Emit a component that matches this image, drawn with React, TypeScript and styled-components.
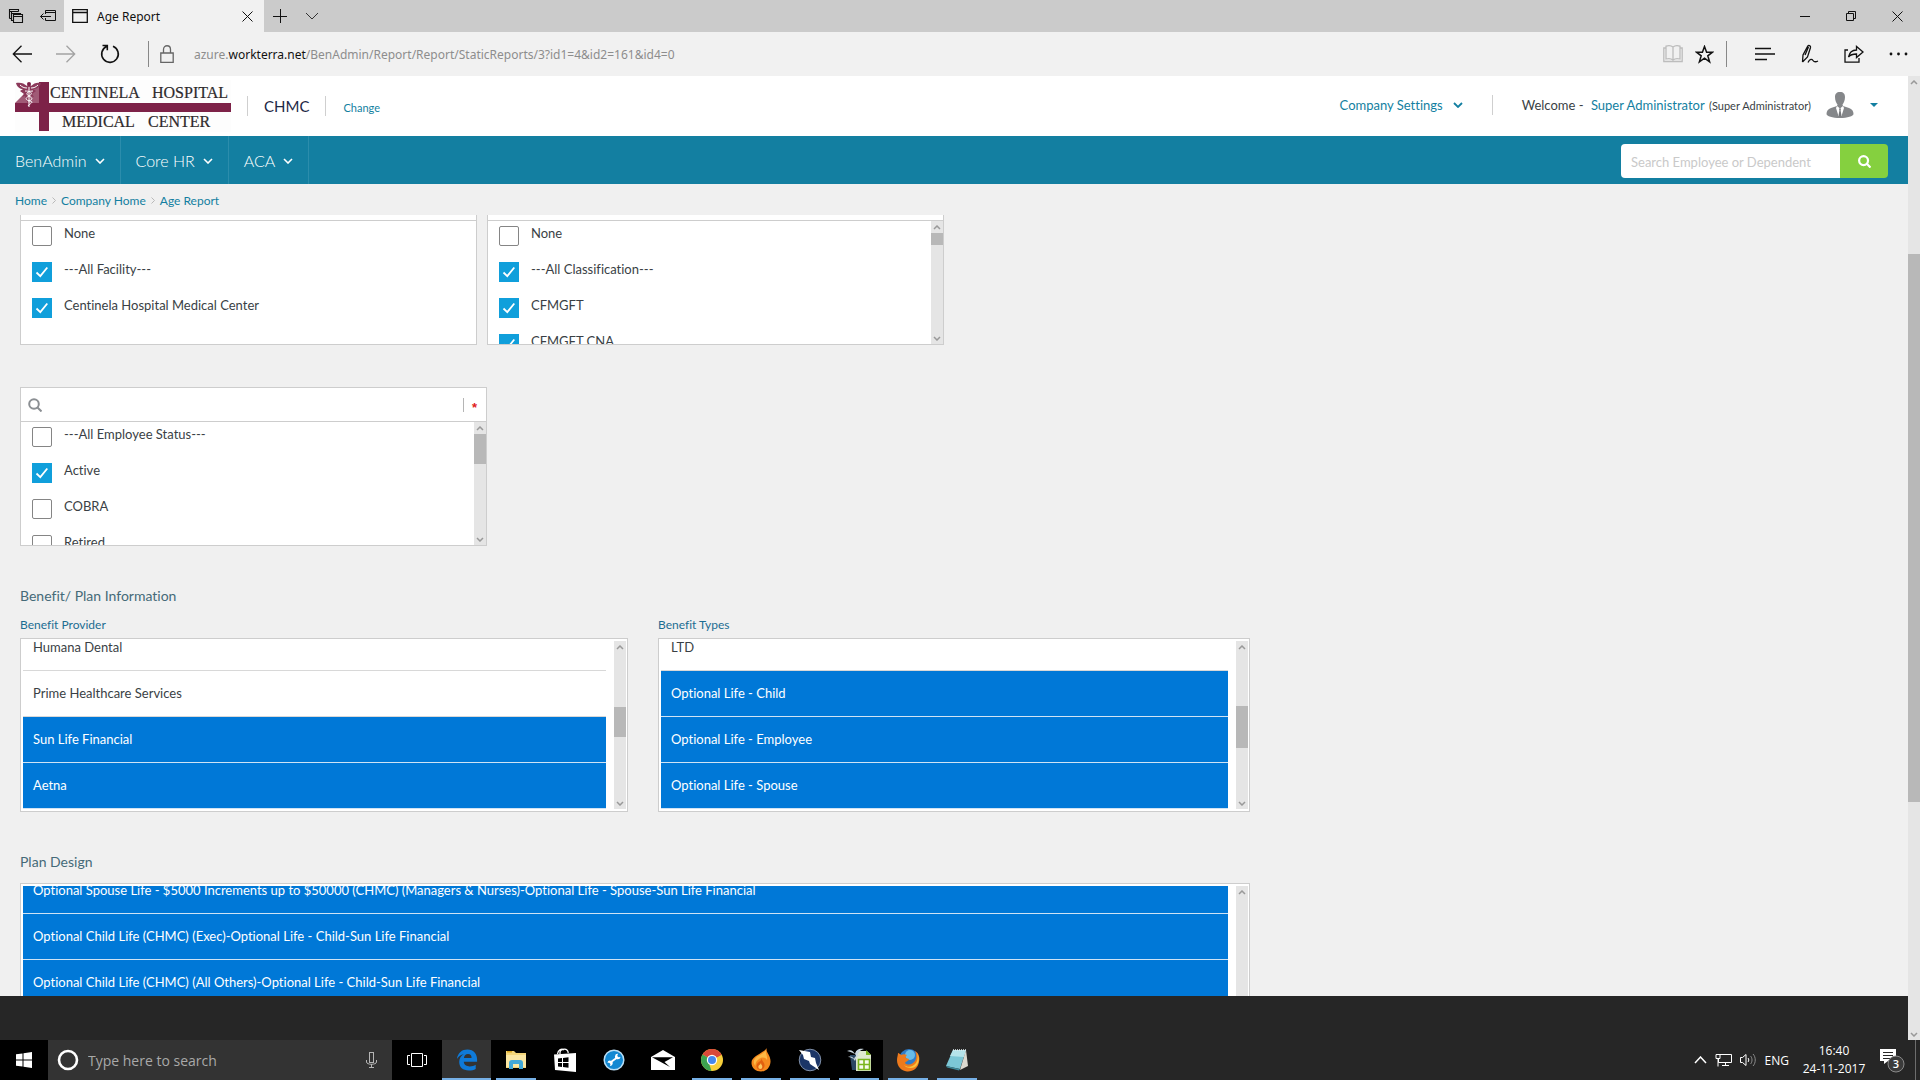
import React from "react";
import styled, { createGlobalStyle } from "styled-components";

const teal = "#137fa1";
const chromeFont = `"Noto Sans", "Open Sans", sans-serif`;

const Global = createGlobalStyle`
  *, *::before, *::after { box-sizing: border-box; }
  html, body, #root { height: 100%; }
  body { margin: 0; font-family: Lato, "Liberation Sans", sans-serif; font-size: 13px; font-variant-ligatures: no-common-ligatures; color: #3a3f45; overflow: hidden; }
  button, input { font: inherit; color: inherit; }
  button { background: none; border: 0; padding: 0; cursor: pointer; }
  a { color: ${teal}; text-decoration: none; }
  ul, ol, h2, p { margin: 0; padding: 0; list-style: none; font-weight: 400; }
  svg { display: block; flex: none; }
`;

const Screen = styled.div`
  display: flex;
  flex-direction: column;
  height: 100vh;
  background: #f0f0f0;
`;

/* ---------- browser chrome ---------- */
const TitleBar = styled.header`
  display: flex;
  flex: none;
  height: 32px;
  background: #cbcbcb;
  font-family: ${chromeFont};
  color: #111;
`;
const TabTools = styled.div`
  display: flex;
  align-items: center;
  gap: 16px;
  width: 64px;
  padding-left: 8px;
`;
const Tab = styled.div`
  display: flex;
  align-items: center;
  width: 200px;
  padding: 0 11px 0 8px;
  background: #f1f1f1;
  font-size: 12px;
`;
const TabTitle = styled.span`
  flex: 1;
  padding-left: 9px;
`;
const TabActions = styled.div`
  display: flex;
  flex: 1;
  align-items: center;
  gap: 18px;
  padding-left: 9px;
`;
const WindowButtons = styled.div`
  display: flex;
`;
const WindowButton = styled.button`
  display: grid;
  place-items: center;
  width: 46px;
`;
const IconButton = styled.button`
  display: grid;
  place-items: center;
`;

const Toolbar = styled.div`
  display: flex;
  flex: none;
  align-items: center;
  height: 44px;
  padding: 0 12px;
  background: #f1f1f1;
  font-family: ${chromeFont};
  color: #111;
`;
const NavButtons = styled.div`
  display: flex;
  align-items: center;
  gap: 24px;
`;
const ToolDivider = styled.span`
  width: 1px;
  height: 26px;
  margin: 0 11px 0 28px;
  background: #888;
`;
const Address = styled.div`
  flex: 1;
  padding-left: 20px;
  font-size: 12px;
  color: #8d8d8d;
  b { font-weight: 400; color: #111; }
`;
const ToolGroup = styled.div<{ $gap: number }>`
  display: flex;
  align-items: center;
  gap: ${(p) => p.$gap}px;
`;
const GroupDivider = styled.span`
  width: 1px;
  height: 26px;
  margin: 0 28px 0 12px;
  background: #888;
`;

/* ---------- page frame ---------- */
const Viewport = styled.div`
  display: flex;
  flex: 1;
  min-height: 0;
`;
const Page = styled.div`
  display: flex;
  flex: 1;
  flex-direction: column;
  min-width: 0;
`;
const SiteHeader = styled.div`
  display: flex;
  flex: none;
  align-items: center;
  height: 60px;
  padding: 0 30px 0 15px;
  background: #fff;
`;
const HeadDivider = styled.span<{ $gap: number }>`
  width: 1px;
  height: 20px;
  margin: 0 ${(p) => p.$gap}px;
  background: #cfcfcf;
`;
const CompanyCode = styled.span`
  font-size: 15px;
  color: #1d2846;
`;
const ChangeLink = styled.a`
  padding: 2px 0 0 1px;
  font-size: 11px;
`;
const Account = styled.div`
  display: flex;
  align-items: center;
  margin-left: auto;
  padding-bottom: 3px;
  font-size: 13px;
  white-space: nowrap;
`;
const SettingsButton = styled.button`
  display: flex;
  align-items: center;
  gap: 10px;
  color: ${teal};
`;
const UserLine = styled.p`
  padding-right: 15px;
  a { margin: 0 1px 0 4px; }
  small { font-size: 11px; }
`;
const UserMenu = styled.button`
  display: flex;
  align-items: center;
  gap: 16px;
`;

const MainNav = styled.nav`
  display: flex;
  flex: none;
  align-items: center;
  height: 48px;
  padding-right: 20px;
  background: ${teal};
`;
const NavItem = styled.button`
  display: flex;
  align-items: center;
  gap: 8px;
  height: 100%;
  padding: 0 15px;
  border-right: 1px solid #2b8dac;
  color: #fff;
  font-size: 16px;
  font-weight: 300;
`;
const NavChevron = styled.span`
  padding-top: 2px;
`;
const SearchForm = styled.form`
  display: flex;
  width: 267px;
  height: 34px;
  margin: 2px 0 0 auto;
  border-radius: 4px;
  overflow: hidden;
`;
const SearchInput = styled.input`
  flex: 1;
  min-width: 0;
  padding: 2px 10px 0;
  border: 0;
  background: #fff;
  font-size: 13px;
  outline: 0;
  &::placeholder { color: #c9c9c9; opacity: 1; }
`;
const SearchButton = styled.button`
  display: grid;
  place-items: center;
  width: 48px;
  background: #85d03f;
`;
const Crumbs = styled.ol`
  display: flex;
  flex: none;
  align-items: center;
  gap: 5px;
  height: 31px;
  padding: 2px 15px 0;
  font-size: 12px;
`;
const Crumb = styled.li`
  display: flex;
  align-items: center;
  gap: 5px;
`;
const Content = styled.main`
  flex: 1;
  min-height: 0;
  padding: 0 20px;
  overflow: hidden;
`;
const Footer = styled.footer`
  flex: none;
  height: 44px;
  background: #262626;
`;

/* ---------- scroll bars ---------- */
const Bar = styled.div`
  display: flex;
  flex: none;
  flex-direction: column;
  width: 12px;
  background: #e5e5e5;
`;
const BarArrow = styled.span`
  display: grid;
  place-items: center;
  height: 12px;
`;
const BarTrack = styled.span<{ $before: number }>`
  flex: 1;
  min-height: 0;
  padding-top: ${(p) => p.$before}px;
`;
const BarThumb = styled.span<{ $size: number }>`
  display: block;
  height: ${(p) => p.$size}px;
  background: #b8b8b8;
`;

function ScrollBar({ before, size }: { before: number; size: number }) {
  return (
    <Bar aria-hidden="true">
      <BarArrow><Chevron up w={8} h={5} color="#999" /></BarArrow>
      <BarTrack $before={before}><BarThumb $size={size} /></BarTrack>
      <BarArrow><Chevron w={8} h={5} color="#999" /></BarArrow>
    </Bar>
  );
}

/* ---------- tick lists ---------- */
const TickRow = styled.div`
  display: flex;
  align-items: flex-start;
  gap: 10px;
  margin-top: -29px;
`;
const TickPanel = styled.section<{ $width: number }>`
  width: ${(p) => p.$width}px;
  border: 1px solid #cdcdcd;
  background: #fff;
`;
const FilterBar = styled.div`
  display: flex;
  align-items: center;
  height: 34px;
  padding: 0 9px 0 7px;
  border-bottom: 1px solid #cdcdcd;
`;
const FilterInput = styled.input`
  flex: 1;
  min-width: 0;
  height: 28px;
  border: 0;
  outline: 0;
  background: transparent;
`;
const Required = styled.span`
  height: 14px;
  padding-left: 8px;
  border-left: 1px solid #b5b5b5;
  color: #e02020;
  font-family: "Liberation Sans", sans-serif;
  font-size: 13px;
  font-weight: 700;
  line-height: 20px;
`;
const TickBody = styled.div`
  display: flex;
  height: 123px;
  overflow: hidden;
`;
const TickList = styled.ul`
  flex: 1;
  min-width: 0;
`;
const TickItem = styled.li`
  height: 36px;
  padding-left: 11px;
`;
const TickLabel = styled.label`
  display: flex;
  gap: 12px;
  font-size: 13px;
  line-height: 24px;
`;
const TickBox = styled.span`
  display: grid;
  width: 20px;
  height: 20px;
  margin-top: 5px;
  place-items: center;
  & > * { grid-area: 1 / 1; pointer-events: none; }
`;
const Tick = styled.input`
  appearance: none;
  width: 20px;
  height: 20px;
  margin: 0;
  border: 1px solid #858585;
  border-radius: 2px;
  background: #fff;
  &:checked { border-color: #109fdb; border-radius: 0; background: #109fdb; }
`;

type Option = [string, boolean];

function TickChooser({ name, width, options, scroll, required }: {
  name: string; width: number; options: Option[]; scroll?: [number, number]; required?: boolean;
}) {
  return (
    <TickPanel $width={width}>
      <FilterBar>
        <Magnifier size={14} color="#8b8f93" stroke={2} />
        <FilterInput aria-label={`Filter ${name}`} />
        {required && <Required>*</Required>}
      </FilterBar>
      <TickBody>
        <TickList>
          {options.map(([text, on]) => (
            <TickItem key={text}>
              <TickLabel>
                <TickBox>
                  <Tick type="checkbox" defaultChecked={on} />
                  {on && (
                    <svg width="14" height="12" viewBox="0 0 14 12"><path d="M1.500 6.500l3.800 3.600L12.300 1.500" fill="none" stroke="#fff" strokeWidth="1.800" /></svg>
                  )}
                </TickBox>
                {text}
              </TickLabel>
            </TickItem>
          ))}
        </TickList>
        {scroll && <ScrollBar before={scroll[0]} size={scroll[1]} />}
      </TickBody>
    </TickPanel>
  );
}

/* ---------- selection lists ---------- */
const SectionTitle = styled.h2`
  padding-bottom: 11px;
  font-size: 14px;
  line-height: 20px;
  color: #456a78;
`;
const PickRow = styled.div`
  display: grid;
  grid-template-columns: minmax(0, 608px) minmax(0, 592px);
  gap: 30px;
`;
const PickLabel = styled.div`
  padding-bottom: 5px;
  font-size: 12px;
  line-height: 16px;
  color: #1c6d92;
`;
const PickBox = styled.div`
  display: flex;
  max-width: 1230px;
  height: 174px;
  padding: 2px 1px 2px 2px;
  border: 1px solid #cdcdcd;
  background: #fff;
`;
const PickView = styled.div`
  flex: 1;
  min-width: 0;
  margin-right: 8px;
  overflow: hidden;
`;
const PickList = styled.ul<{ $scrolled: number }>`
  margin-top: -${(p) => p.$scrolled}px;
`;
const PickItem = styled.li<{ $on: boolean }>`
  height: 46px;
  padding-left: 10px;
  border-bottom: 1px solid ${(p) => (p.$on ? "#cfe3f5" : "#d8d8d8")};
  background: ${(p) => (p.$on ? "#0078d7" : "#fff")};
  color: ${(p) => (p.$on ? "#fff" : "#3a3f45")};
  font-size: 13px;
  line-height: 45px;
  white-space: nowrap;
`;

function Picker({ label, scrolled, options, scroll }: { label: string; scrolled: number; options: Option[]; scroll: [number, number] }) {
  return (
    <PickBox>
      <PickView>
        <PickList $scrolled={scrolled} role="listbox" aria-multiselectable="true" aria-label={label}>
          {options.map(([text, on]) => (
            <PickItem key={text} role="option" aria-selected={on} $on={on}>{text}</PickItem>
          ))}
        </PickList>
      </PickView>
      <ScrollBar before={scroll[0]} size={scroll[1]} />
    </PickBox>
  );
}

const Stack = styled.div<{ $above: number }>`
  padding-top: ${(p) => p.$above}px;
`;

/* ---------- taskbar ---------- */
const Taskbar = styled.footer`
  display: flex;
  flex: none;
  height: 40px;
  background: #262626;
  color: #fff;
  font-family: "Open Sans", "Noto Sans", sans-serif;
`;
const StartButton = styled.button`
  display: grid;
  place-items: center;
  width: 48px;
  background: #000;
`;
const Cortana = styled.label`
  display: flex;
  align-items: center;
  gap: 9px;
  width: 344px;
  padding: 0 15px 0 9px;
  background: #333;
`;
const CortanaInput = styled.input`
  flex: 1;
  min-width: 0;
  padding: 0;
  border: 0;
  outline: 0;
  background: none;
  font-size: 14px;
  &::placeholder { color: #a9a9a9; opacity: 1; }
`;
const TaskView = styled.button`
  display: grid;
  place-items: center;
  width: 50px;
  background: #000;
`;
const AppButton = styled.button<{ $running?: boolean; $active?: boolean; $dark?: boolean }>`
  display: grid;
  grid-template: 1fr / 1fr;
  place-items: center;
  width: 49px;
  height: 40px;
  background: ${(p) => (p.$active ? "#333" : p.$dark ? "#000" : "transparent")};
  &::after {
    content: "";
    grid-area: 1 / 1;
    align-self: end;
    width: ${(p) => (p.$active ? "49px" : "40px")};
    height: 2px;
    background: ${(p) => (p.$running ? "#76b0e6" : "transparent")};
  }
  & > svg { grid-area: 1 / 1; }
`;
const Tray = styled.div`
  display: flex;
  align-items: center;
  margin-left: auto;
  gap: 8px;
  font-size: 12px;
`;
const Clock = styled.time`
  width: 74px;
  text-align: center;
  font-size: 12px;
  line-height: 18px;
`;
const NotificationButton = styled.button`
  padding-right: 2px;
`;
const DesktopEdge = styled.span`
  width: 5px;
  height: 40px;
  border-left: 1px solid #6d6d6d;
`;

/* ---------- drawings ---------- */
function Chevron({ up, w = 10, h = 6, color, stroke = 1.5 }: { up?: boolean; w?: number; h?: number; color: string; stroke?: number }) {
  const d = up ? `M1 ${h - 1}L${w / 2} 1L${w - 1} ${h - 1}` : `M1 1L${w / 2} ${h - 1}L${w - 1} 1`;
  return <svg width={w} height={h}><path d={d} fill="none" stroke={color} strokeWidth={stroke} /></svg>;
}
function Magnifier({ size, color, stroke }: { size: number; color: string; stroke: number }) {
  return (
    <svg width={size} height={size} viewBox="0 0 14 14" fill="none" stroke={color} strokeWidth={stroke}>
      <circle cx="6" cy="6" r="4.800" /><path d="M9.500 9.500l4 4" />
    </svg>
  );
}
const line = { fill: "none", stroke: "#111", strokeWidth: 1.3 } as const;

function HospitalLogo() {
  return (
    <svg width="216" height="52" viewBox="0 0 216 52" role="img" aria-label="Centinela Hospital Medical Center">
      <rect width="216" height="52" fill="#fdfdfd" />
      <path d="M24 2h10v49H24z M0 23h216v9H0z" fill="#7d2248" />
      <path d="M0 23L12 11l12-6v18z" fill="#a05a76" />
      <path d="M1 3c4-1 8 0 11 3l2-3 2 3c3-3 6-4 10-3-1 4-4 6-8 6l3 2-4 3 2 3-4-1-2 8-3-8-3 1 2-3-4-3 3-2C5 9 2 7 1 3z" fill="#8c3a5b" />
      <circle cx="14" cy="4" r="2" fill="#7d2248" />
      <path d="M14 7v20" stroke="#fff" strokeWidth="1" />
      <path d="M5 5c2 2 4 3 7 3M23 5c-2 2-4 3-7 3M10 11c7 0 8 3 4 5s-4 4 1 5-1 3-2 5M18 11c-6 0-8 3-4 5s4 4-1 5" fill="none" stroke="#fff" strokeWidth="1" />
      <g fontFamily="Liberation Serif, serif" fontSize="16" fill="#2e2a2c" stroke="#2e2a2c" strokeWidth=".2">
        <text x="35" y="18">CENTINELA</text>
        <text x="137" y="18">HOSPITAL</text>
        <text x="47" y="47">MEDICAL</text>
        <text x="133" y="47">CENTER</text>
      </g>
    </svg>
  );
}
function Avatar() {
  return (
    <svg width="28" height="26" viewBox="0 0 28 26">
      <path d="M14 0c3.500 0 5 2 5 5 0 3.500-1.300 6-2.500 7.500L17 14l6 2c3 1 4.500 3 4.500 6 0 2-6 4-13.500 4S.5 24 .5 22c0-3 1.500-5 4.500-6l6-2 .5-1.500C10.300 11 9 8.500 9 5c0-3 1.500-5 5-5z" fill="#85878a" />
      <path d="M11 14l3 2.500 3-2.500 1 2-2.500 8h-3L10 16z" fill="#fff" />
      <path d="M13 16.500h2l-.4 2 .9 5-1.500 1.500-1.500-1.500.9-5z" fill="#77797c" />
    </svg>
  );
}

function StoreIcon() {
  return (
    <svg width="22" height="24" viewBox="0 0 22 24">
      <path d="M6 6V4.500C6 0 15 0 14 5M3.500 6C4 1.500 8 0 10 2" fill="none" stroke="#fff" strokeWidth="1.300" />
      <path d="M0 6.500L22 5v19L1 22z" fill="#fff" />
      <path d="M4 10.500l4-.5v4H4zM9 9.900l5.500-.6V14H9zM4 15h4v4l-4-.5zM9 15h5.500v4.800L9 19.100z" fill="#000" />
    </svg>
  );
}
function ExplorerIcon() {
  return (
    <svg width="22" height="20" viewBox="0 0 22 20">
      <path d="M1 1h8l2 2h10v15H1z" fill="#f4d67a" /><path d="M1 5h20v12H1z" fill="#fbe7a3" /><path d="M2 1h5v1.500H2z" fill="#d9a520" />
      <path d="M4 19v-6c0-2 1-3 3-3h8c2 0 3 1 3 3v6h-4v-5H8v5z" fill="#41a8d8" />
    </svg>
  );
}
function EdgeIcon() {
  return (
    <svg width="22" height="22" viewBox="0 0 24 24">
      <path d="M1 11C2 4 6.500.5 12.500.5c7 0 10.500 5 10.500 11V14H8.500c.2 3.600 3.200 5 6.500 5 2.500 0 4.800-.7 6.500-1.800v4.600C19.500 23 17 23.500 14 23.500 7.500 23.500 3.500 20 3.500 14.300c0-4 2-7 5-8.600C5.500 6.300 2.800 8 1 11zm7.600-1.300H17c0-2.500-1.200-4.300-3.900-4.300-2.500 0-4 1.800-4.500 4.300z" fill="#0f7ad8" />
    </svg>
  );
}
function WrenchIcon() {
  return (
    <svg width="22" height="22" viewBox="0 0 22 22">
      <circle cx="11" cy="11" r="9.800" fill="#1288d2" stroke="#b9def5" strokeWidth="1.500" />
      <path d="M7 13.800l7.500-5.600" stroke="#fff" strokeWidth="1.800" /><path d="M17.500 8a2.800 2.800 0 1 1-2.500-3.300l-.8 2.200 1.300 1.300zM4.400 13.800a2.700 2.700 0 1 1 2.500 3.200l.6-2-1.300-1.300z" fill="#fff" />
    </svg>
  );
}
function MailIcon() {
  return (
    <svg width="24" height="20" viewBox="0 0 24 20"><path d="M0 7L12 0l12 7v13H0z" fill="#fff" /><path d="M1 7.200h21L13.500 12l5.500 5z" fill="#000" /></svg>
  );
}
function ChromeIcon() {
  return (
    <svg width="22" height="22" viewBox="0 0 22 22">
      <circle cx="11" cy="11" r="11" fill="#f6cf3b" />
      <path d="M11 11L1.500 5.500A11 11 0 0 1 20.500 5.500z" fill="#d9493a" /><path d="M11 11L1.500 5.500A11 11 0 0 0 10.500 22z" fill="#3da350" /><path d="M11 5.700h9.600L11 11z" fill="#d9493a" />
      <path d="M15.500 13.500L10.500 22l-2-6z" fill="#f6cf3b" /><circle cx="11" cy="11" r="5.200" fill="#fff" /><circle cx="11" cy="11" r="4" fill="#4688ee" />
    </svg>
  );
}
function FlameIcon() {
  return (
    <svg width="20" height="24" viewBox="0 0 20 24">
      <path d="M16 0c-2 4 4 7 3.500 14C19 20 15 23.500 10 23.500S.5 20 .5 15C.5 8 10 7 16 0z" fill="#f68a1e" />
      <path d="M15 2c-1 4 2 6 1 10-2-3-5-3-8-1-2 1.500-4 4-3.500 7C1 14 3 10 8 7.500 11 6 13.500 4 15 2z" fill="#fdb845" />
      <path d="M11 10c-1 3 3 4 2.500 8-.4 2.500-2 4-4 4s-4-1.500-4-4c0-4 4.500-4 5.500-8z" fill="#e2600f" /><path d="M10 15c0 2 1.500 2 1.300 4a2 2 0 0 1-4 0c0-2 2-2 2.700-4z" fill="#fdc860" />
    </svg>
  );
}
function BoltIcon() {
  return (
    <svg width="24" height="24" viewBox="0 0 24 24">
      <circle cx="12" cy="12" r="10.800" fill="#1b3567" stroke="#7f8fa8" strokeWidth="1" />
      <path d="M1 2l11 2 1 5 4 1 1 5 3 7-9-6-1-3-5-2-1-4z" fill="#fff" />
    </svg>
  );
}
function SheetIcon() {
  return (
    <svg width="24" height="24" viewBox="0 0 24 24">
      <path d="M3 7h10v15H5z" fill="#2b4763" /><path d="M9 3h11l4 4v16H9z" fill="#dfe9cf" /><path d="M19 2l5 5h-5z" fill="#7ab51d" />
      <path d="M11.500 11.500h11v10h-11z M17 11.500v10M11.500 16.500h11" fill="#f7fbef" stroke="#7ab51d" strokeWidth="1.600" />
      <path d="M0 3c4-2 6 0 8 3 1-5 5-6 9-5-4 1-5 3-7 7C7 5 4 4 0 3zM1 9c3-1 5 0 6 2 1-3 3-4 6-4-3 1-4 3-5 6-2-3-4-4-7-4z" fill="#c9d6df" />
    </svg>
  );
}
function FirefoxIcon() {
  return (
    <svg width="24" height="24" viewBox="0 0 24 24">
      <circle cx="13" cy="11" r="10" fill="#2f7cc8" /><circle cx="14" cy="7" r="5" fill="#67bce8" />
      <path d="M2 5c1 0 2 1 3 2 2-1 4-1 6 0-1 1-2 2-1 3l3 1c0 2-3 2-4 4 2 2 5 2 8 0 4-3 4-8 2-12 4 2 5 7 4 11-1 6-6 10-12 9.500C5 23 1 18 1 12 1 9 2 7 2 5z" fill="#ee7a1c" />
      <path d="M21 5c3 5 2 11-2 14-4 2-9 1-11-2 4 3 9 2 12-2 2-3 2-7 1-10z" fill="#fbc23a" />
    </svg>
  );
}
function NotepadIcon() {
  return (
    <svg width="24" height="24" viewBox="0 0 24 24">
      <path d="M8 2h13l-6 19L1 18z" fill="#7cc7d6" /><path d="M8 2h13l-2 7L5 8z" fill="#b5e3ea" /><path d="M21 2l2 16-8 4z" fill="#dcd9d0" /><path d="M1 18l14 3-1 1.500-12-3z" fill="#3f8b9c" /><path d="M8 2h13" stroke="#e4eef0" strokeWidth="1.600" strokeDasharray="1 1" />
    </svg>
  );
}

const facility: Option[] = [["None", false], ["---All Facility---", true], ["Centinela Hospital Medical Center", true]];
const classes: Option[] = [["None", false], ["---All Classification---", true], ["CFMGFT", true], ["CFMGFT CNA", true]];
const statuses: Option[] = [["---All Employee Status---", false], ["Active", true], ["COBRA", false], ["Retired", false]];
const providers: Option[] = [["Humana Dental", false], ["Prime Healthcare Services", false], ["Sun Life Financial", true], ["Aetna", true]];
const types: Option[] = [["LTD", false], ["Optional Life - Child", true], ["Optional Life - Employee", true], ["Optional Life - Spouse", true]];
const plans: Option[] = [
  ["Optional Spouse Life - $5000 Increments up to $50000 (CHMC) (Managers & Nurses)-Optional Life - Spouse-Sun Life Financial", true],
  ["Optional Child Life (CHMC) (Exec)-Optional Life - Child-Sun Life Financial", true],
  ["Optional Child Life (CHMC) (All Others)-Optional Life - Child-Sun Life Financial", true],
];

export default function App() {
  return (
    <Screen>
      <Global />
      <TitleBar>
        <TabTools>
          <IconButton aria-label="Tabs you've set aside">
            <svg width="16" height="16" {...line}><path d="M1.500 10.500v-9h9v2M1.500 3.500h9M3.500 12.500v-9M1.500 10.500h2v2h2M3.500 5.500h9v1M5.500 6.500h9v8h-9zM5.500 8.500h9" strokeWidth="1.100" /></svg>
          </IconButton>
          <IconButton aria-label="Set these tabs aside">
            <svg width="16" height="14" {...line} strokeWidth={1}><path d="M5.500 5V1.500h10v10h-10V9M5.500 3.500h10M11 7.500H.5M3.500 4.500l-3 3 3 3" /></svg>
          </IconButton>
        </TabTools>
        <Tab>
          <svg width="16" height="14" {...line}><path d="M.7.7h14.600v12.600H.7zM.7 3.500h14.600" /></svg>
          <TabTitle>Age Report</TabTitle>
          <IconButton aria-label="Close tab"><svg width="11" height="11" {...line} strokeWidth={1}><path d="M.5.5l10 10M10.500.5l-10 10" /></svg></IconButton>
        </Tab>
        <TabActions>
          <IconButton aria-label="New tab"><svg width="14" height="14" {...line} strokeWidth={1}><path d="M7.500 0v14M0 7.500h14" /></svg></IconButton>
          <IconButton aria-label="Show tab previews"><Chevron w={14} h={8} color="#333" stroke={1} /></IconButton>
        </TabActions>
        <WindowButtons>
          <WindowButton aria-label="Minimize"><svg width="10" height="10" {...line} strokeWidth={1}><path d="M0 5.500h10" /></svg></WindowButton>
          <WindowButton aria-label="Restore"><svg width="10" height="10" {...line} strokeWidth={1}><path d="M.5 2.500h7v7h-7zM2.500 2.500v-2h7v7h-2" /></svg></WindowButton>
          <WindowButton aria-label="Close"><svg width="11" height="11" {...line} strokeWidth={1}><path d="M.5.5l10 10M10.500.5l-10 10" /></svg></WindowButton>
        </WindowButtons>
      </TitleBar>

      <Toolbar>
        <NavButtons>
          <IconButton aria-label="Back"><svg width="20" height="18" {...line}><path d="M20 9H1.500M9.500.8L1.300 9l8.200 8.200" /></svg></IconButton>
          <IconButton aria-label="Forward"><svg width="20" height="18" {...line} stroke="#a2a2a2"><path d="M0 9h18.500M10.500.8L18.700 9l-8.200 8.200" /></svg></IconButton>
          <IconButton aria-label="Refresh"><svg width="20" height="20" {...line} strokeWidth={1.600}><path d="M13 2.300A8.300 8.300 0 1 1 6.500 2.500M2.500 1.500h4.800v4.800" /></svg></IconButton>
        </NavButtons>
        <ToolDivider />
        <svg width="14" height="18" {...line} stroke="#666"><path d="M.8 8h12.400v9.300H.8zM3.500 8V4.500c0-5 7-5 7 0V8" /></svg>
        <Address>azure.<b>workterra.net</b>/BenAdmin/Report/Report/StaticReports/3?id1=4&amp;id2=161&amp;id4=0</Address>
        <ToolGroup $gap={12}>
          <IconButton aria-label="Reading view"><svg width="20" height="18" {...line} stroke="#bdbdbd"><path d="M10 2v13M10 2C8 .5 5 .5 3 1.200V14c2-.6 5-.6 7 1 2-1.600 5-1.600 7-1V1.200C15 .5 12 .5 10 2zM3 3H.8v13.500h18.400V3H17" /></svg></IconButton>
          <IconButton aria-label="Add to favorites"><svg width="19" height="19" {...line} strokeWidth={1.500}><path d="M9.500 1.500l2.100 5.700h5.900l-4.700 3.600 1.800 6-5.100-3.600-5.100 3.600 1.800-6L1.500 7.200h5.900z" /></svg></IconButton>
        </ToolGroup>
        <GroupDivider />
        <ToolGroup $gap={25}>
          <IconButton aria-label="Hub"><svg width="20" height="14" {...line} strokeWidth={1.500}><path d="M0 1.500h16M0 7h20M0 12.500h12" /></svg></IconButton>
          <IconButton aria-label="Make a web note"><svg width="19" height="20" {...line}><path d="M2.500 18L3 11 7.500 2.500C8.500.8 11 1.500 10.500 3.500L7.500 13l-5 5M5 11l3.500-8M8 18.500c2-4 4-3.500 5-2s3 1.500 5 .5" /></svg></IconButton>
          <IconButton aria-label="Share"><svg width="20" height="18" {...line}><path d="M4 5H1v12.200h14V13M4.500 12c1-5 4-7 8-7V1.500L19 7l-6.500 5.500V9c-3 0-6 .5-8 3z" /></svg></IconButton>
          <IconButton aria-label="More"><svg width="19" height="4" fill="#111"><circle cx="2" cy="2" r="1.400" /><circle cx="9.500" cy="2" r="1.400" /><circle cx="17" cy="2" r="1.400" /></svg></IconButton>
        </ToolGroup>
      </Toolbar>

      <Viewport>
        <Page>
          <SiteHeader>
            <HospitalLogo />
            <HeadDivider $gap={16} />
            <CompanyCode>CHMC</CompanyCode>
            <HeadDivider $gap={16} />
            <ChangeLink href="#change">Change</ChangeLink>
            <Account>
              <SettingsButton>Company Settings<Chevron color={teal} stroke={1.8} /></SettingsButton>
              <HeadDivider $gap={29} />
              <UserLine>Welcome - <a href="#profile">Super Administrator</a> <small>(Super Administrator)</small></UserLine>
              <UserMenu aria-label="User menu">
                <Avatar />
                <svg width="8" height="4"><path d="M0 0h8L4 4z" fill={teal} /></svg>
              </UserMenu>
            </Account>
          </SiteHeader>
          <MainNav>
            {["BenAdmin", "Core HR", "ACA"].map((t) => (
              <NavItem key={t}>{t}<NavChevron><Chevron color="#fff" stroke={1.6} /></NavChevron></NavItem>
            ))}
            <SearchForm>
              <SearchInput aria-label="Search Employee or Dependent" placeholder="Search Employee or Dependent" />
              <SearchButton type="button" aria-label="Search"><Magnifier size={13} color="#fff" stroke={2.4} /></SearchButton>
            </SearchForm>
          </MainNav>
          <Crumbs>
            {["Home", "Company Home", "Age Report"].map((t, i) => (
              <Crumb key={t}>
                {i > 0 && <svg width="4" height="7"><path d="M.5.5l3 3-3 3" fill="none" stroke="#b9b9b9" /></svg>}
                <a href="#crumb">{t}</a>
              </Crumb>
            ))}
          </Crumbs>
          <Content>
            <TickRow>
              <TickChooser name="facility" width={457} options={facility} />
              <TickChooser name="classification" width={457} options={classes} scroll={[0, 12]} />
            </TickRow>
            <Stack $above={42}>
              <TickChooser name="employee status" width={467} options={statuses} scroll={[0, 30]} required />
            </Stack>
            <Stack $above={40}>
              <SectionTitle>Benefit/ Plan Information</SectionTitle>
              <PickRow>
                <div>
                  <PickLabel>Benefit Provider</PickLabel>
                  <Picker label="Benefit Provider" scrolled={16} options={providers} scroll={[54, 30]} />
                </div>
                <div>
                  <PickLabel>Benefit Types</PickLabel>
                  <Picker label="Benefit Types" scrolled={16} options={types} scroll={[53, 42]} />
                </div>
              </PickRow>
            </Stack>
            <Stack $above={40}>
              <SectionTitle>Plan Design</SectionTitle>
              <Picker label="Plan Design" scrolled={18} options={plans} scroll={[110, 20]} />
            </Stack>
          </Content>
          <Footer />
        </Page>
        <ScrollBar before={166} size={548} />
      </Viewport>

      <Taskbar>
        <StartButton aria-label="Start">
          <svg width="16" height="16" fill="#fff"><path d="M0 2.300L6.500 1.400V7.500H0zM7.500 1.200L16 0v7.500H7.500zM0 8.500h6.500v6.100L0 13.700zM7.500 8.500H16V16l-8.500-1.200z" /></svg>
        </StartButton>
        <Cortana>
          <svg width="22" height="22"><circle cx="11" cy="11" r="9" fill="none" stroke="#fff" strokeWidth="2.600" /></svg>
          <CortanaInput aria-label="Type here to search" placeholder="Type here to search" />
          <svg width="11" height="16" fill="none" stroke="#b5b5b5"><rect x="3.500" y=".5" width="4" height="10" /><path d="M.5 8v2c0 3 10 3 10 0V8M5.500 12v3.500M3 15.500h5" /></svg>
        </Cortana>
        <TaskView aria-label="Task view">
          <svg width="20" height="14" fill="none" stroke="#fff"><path d="M4.500.5h11v13h-11zM3 2.500H.5v9H3M17 2.500h2.500v9H17" /></svg>
        </TaskView>
        <AppButton $running $active aria-label="Edge"><EdgeIcon /></AppButton>
        <AppButton $running $dark aria-label="File Explorer"><ExplorerIcon /></AppButton>
        <AppButton $dark aria-label="Store"><StoreIcon /></AppButton>
        <AppButton $dark aria-label="Support tool"><WrenchIcon /></AppButton>
        <AppButton $dark aria-label="Mail"><MailIcon /></AppButton>
        <AppButton $running $dark aria-label="Chrome"><ChromeIcon /></AppButton>
        <AppButton $running $dark aria-label="Campfire"><FlameIcon /></AppButton>
        <AppButton $running $dark aria-label="Zap"><BoltIcon /></AppButton>
        <AppButton $running $dark aria-label="Spreadsheet"><SheetIcon /></AppButton>
        <AppButton $running aria-label="Firefox"><FirefoxIcon /></AppButton>
        <AppButton $running aria-label="Notepad"><NotepadIcon /></AppButton>
        <Tray>
          <Chevron up w={13} h={8} color="#fff" />
          <svg width="17" height="14" fill="none" stroke="#fff"><path d="M5 1.500h11.500v8H3.500V6M1 1.500h4v4H1zM3 5.500v8M10.500 9.500v3M7 12.500h7" /></svg>
          <svg width="17" height="14" fill="none" stroke="#fff"><path d="M.5 4.500h2l3.500-3v11l-3.500-3h-2zM8 5c1 1 1 3 0 4" /><path d="M10.500 3c2 2 2 6 0 8M13 1c3 3 3 9 0 12" stroke="#8b8b8b" /></svg>
          <span>ENG</span>
          <Clock>16:40<br />24-11-2017</Clock>
          <NotificationButton aria-label="Notifications">
            <svg width="26" height="26">
              <path d="M1 2h16v12H9l-4 3v-3H1z" fill="#fff" /><path d="M4 5.500h10M4 8.500h10M4 11.500h7" stroke="#262626" />
              <circle cx="17" cy="17" r="8" fill="#3b3b3b" stroke="#8b8b8b" />
              <text x="17" y="21" textAnchor="middle" fontFamily="Open Sans, sans-serif" fontSize="11" fontWeight="600" fill="#fff">3</text>
            </svg>
          </NotificationButton>
          <DesktopEdge />
        </Tray>
      </Taskbar>
    </Screen>
  );
}
